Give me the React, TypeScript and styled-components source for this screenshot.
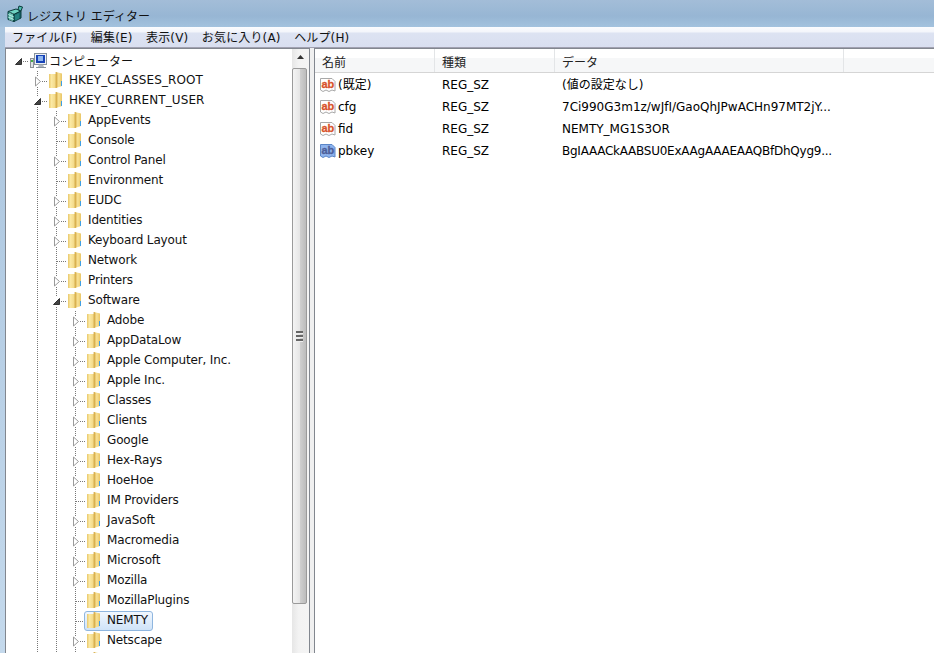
import { createGlobalStyle } from 'styled-components';
import styled from 'styled-components';

const GlobalStyle = createGlobalStyle`
  html, body {
    margin: 0;
    height: 100%;
    overflow: hidden;
  }
  body {
    font-family: "DejaVu Sans", "Noto Sans CJK JP", sans-serif;
    font-size: 12px;
    color: #000;
  }
`;

type TreeNode = {
  label: string;
  depth: number;
  state?: 'open' | 'closed';
  selected?: boolean;
};

const treeNodes: TreeNode[] = [
  { label: 'HKEY_CLASSES_ROOT', depth: 1, state: 'closed' },
  { label: 'HKEY_CURRENT_USER', depth: 1, state: 'open' },
  { label: 'AppEvents', depth: 2, state: 'closed' },
  { label: 'Console', depth: 2 },
  { label: 'Control Panel', depth: 2, state: 'closed' },
  { label: 'Environment', depth: 2 },
  { label: 'EUDC', depth: 2, state: 'closed' },
  { label: 'Identities', depth: 2, state: 'closed' },
  { label: 'Keyboard Layout', depth: 2, state: 'closed' },
  { label: 'Network', depth: 2 },
  { label: 'Printers', depth: 2, state: 'closed' },
  { label: 'Software', depth: 2, state: 'open' },
  { label: 'Adobe', depth: 3, state: 'closed' },
  { label: 'AppDataLow', depth: 3, state: 'closed' },
  { label: 'Apple Computer, Inc.', depth: 3, state: 'closed' },
  { label: 'Apple Inc.', depth: 3, state: 'closed' },
  { label: 'Classes', depth: 3, state: 'closed' },
  { label: 'Clients', depth: 3, state: 'closed' },
  { label: 'Google', depth: 3, state: 'closed' },
  { label: 'Hex-Rays', depth: 3, state: 'closed' },
  { label: 'HoeHoe', depth: 3, state: 'closed' },
  { label: 'IM Providers', depth: 3 },
  { label: 'JavaSoft', depth: 3, state: 'closed' },
  { label: 'Macromedia', depth: 3, state: 'closed' },
  { label: 'Microsoft', depth: 3, state: 'closed' },
  { label: 'Mozilla', depth: 3, state: 'closed' },
  { label: 'MozillaPlugins', depth: 3 },
  { label: 'NEMTY', depth: 3, selected: true },
  { label: 'Netscape', depth: 3, state: 'closed' },
  { label: '', depth: 3, state: 'closed' },
];

const values = [
  { name: '(既定)', type: 'REG_SZ', data: '(値の設定なし)', kind: 'red' },
  { name: 'cfg', type: 'REG_SZ', data: '7Ci990G3m1z/wJfI/GaoQhJPwACHn97MT2jY...', kind: 'red' },
  { name: 'fid', type: 'REG_SZ', data: 'NEMTY_MG1S3OR', kind: 'red' },
  { name: 'pbkey', type: 'REG_SZ', data: 'BgIAAACkAABSU0ExAAgAAAEAAQBfDhQyg9...', kind: 'blue', tight: true },
];

const Window = styled.div`
  width: 934px;
  height: 653px;
  display: flex;
  flex-direction: column;
  overflow: hidden;
  background: linear-gradient(#a9c4de, #c4d9ec);
`;

const TitleBar = styled.div`
  height: 27px;
  flex: none;
  display: flex;
  align-items: center;
  gap: 3px;
  padding-left: 7px;
  background: linear-gradient(#a3bdd8, #97b6d4 60%, #a3c2de);
`;

const Title = styled.span`
  font-size: 12px;
  padding-top: 3px;
  color: #111;
`;

const MenuBar = styled.div`
  height: 21px;
  flex: none;
  margin-left: 5px;
  display: flex;
  align-items: center;
  padding: 0 0 2px 7px;
  gap: 13.5px;
  background: linear-gradient(#fbfcfe 0, #f3f5fb 5px, #dde3f2 6px, #d9dff0);
  border-bottom: 1px solid #a0a0b0;
  box-sizing: border-box;
`;

const MenuItem = styled.span`
  font-size: 12px;
  letter-spacing: 0.15px;
  color: #111;
`;

const Body = styled.div`
  flex: 1;
  min-height: 0;
  margin-left: 5px;
  display: flex;
  background: #f0f0f0;
`;

const TreePane = styled.div`
  width: 305px;
  flex: none;
  display: flex;
  background: #fff;
  border: 1px solid #82878f;
  border-bottom: none;
  box-sizing: border-box;
`;

const TreeList = styled.div`
  flex: 1;
  min-width: 0;
  padding: 2px 0 0 3px;
  overflow: hidden;
`;

const Row = styled.div`
  height: 20px;
  display: flex;
  align-items: center;
`;

const GuideCell = styled.div<{ $line: boolean }>`
  width: 19px;
  height: 20px;
  flex: none;
  background: ${(p) =>
    p.$line ? 'repeating-linear-gradient(#777 0 1px, transparent 1px 2px) 9px 0 / 1px 100% no-repeat' : 'none'};
`;

const ExpanderCell = styled.div<{ $up: boolean }>`
  width: 19px;
  height: 20px;
  flex: none;
  display: flex;
  align-items: center;
  justify-content: center;
  background:
    repeating-linear-gradient(90deg, #777 0 1px, transparent 1px 2px) 10px 10px / 9px 1px no-repeat,
    ${(p) =>
      p.$up
        ? 'repeating-linear-gradient(#777 0 1px, transparent 1px 2px) 9px 0 / 1px 100% no-repeat'
        : 'none'};
`;

const ArrowBox = styled.svg`
  display: block;
  background: #fff;
`;

const FolderBox = styled.svg`
  flex: none;
  display: block;
  margin: -2px 4px 0 1px;
`;

const ComputerBox = styled.svg`
  flex: none;
  display: block;
  margin: 0 2px 0 1px;
`;

const NodeLabel = styled.span<{ $depth: number }>`
  height: 18px;
  line-height: 17px;
  padding: 0 3px 0 2px;
  margin-left: -1px;
  white-space: nowrap;
  color: #111;
  letter-spacing: ${(p) => (p.$depth === 1 ? '0.1px' : '-0.15px')};
`;

const RootLabel = styled.span`
  padding-bottom: 2px;
  white-space: nowrap;
  color: #111;
`;

const SelectedBox = styled.div`
  display: flex;
  align-items: center;
  height: 20px;
  margin-left: -1px;
  padding-right: 1px;
  box-sizing: border-box;
  border: 1px solid #8fb6df;
  border-radius: 3px;
  background: linear-gradient(#f1f7fe, #cfe3f8);
`;

const ScrollBar = styled.div`
  width: 17px;
  flex: none;
  display: flex;
  flex-direction: column;
  background: linear-gradient(90deg, #e6e6e6, #f3f3f3 40%, #f4f4f4);
`;

const ScrollButton = styled.div`
  height: 19px;
  width: 100%;
  flex: none;
  display: flex;
  align-items: center;
  justify-content: center;
  padding-bottom: 4px;
  box-sizing: border-box;
`;

const Thumb = styled.div`
  height: 536px;
  width: 15px;
  flex: none;
  display: flex;
  flex-direction: column;
  align-items: center;
  justify-content: center;
  gap: 1px;
  box-sizing: border-box;
  border: 1px solid #9a9a9a;
  border-radius: 2px;
  background: linear-gradient(90deg, #f4f4f4, #e6e6e6 50%, #cfcfcf 55%, #bcbcbc);
`;

const Grip = styled.div`
  width: 7px;
  height: 2px;
  background: #666;
  border-bottom: 1px solid #eee;
`;

const Splitter = styled.div`
  width: 4px;
  flex: none;
`;

const ListPane = styled.div`
  flex: 1;
  min-width: 0;
  background: #fff;
  border: 1px solid #82878f;
  border-bottom: none;
  border-right: none;
  box-sizing: border-box;
`;

const HeaderRow = styled.div`
  height: 24px;
  display: flex;
  box-sizing: border-box;
  border-bottom: 1px solid #d5d5d5;
  background: linear-gradient(#fff 0 9px, #f6f7f8 9px);
`;

const HeaderCell = styled.div<{ $width: number }>`
  width: ${(p) => p.$width}px;
  flex: none;
  box-sizing: border-box;
  padding: 4px 0 0 7px;
  border-right: 1px solid #e3e5e7;
  font-size: 12px;
  color: #222;
`;

const ValueList = styled.div`
  padding-top: 1px;
`;

const ValueRow = styled.div`
  height: 22px;
  display: flex;
  align-items: center;
  line-height: 15px;
`;

const NameCell = styled.div`
  width: 121px;
  flex: none;
  display: flex;
  align-items: center;
  gap: 2px;
  padding-left: 5px;
  box-sizing: border-box;
`;

const TextCell = styled.div<{ $width: number; $tight?: boolean }>`
  width: ${(p) => p.$width}px;
  flex: none;
  padding-left: 6px;
  box-sizing: border-box;
  white-space: nowrap;
  letter-spacing: ${(p) => (p.$tight ? '-0.25px' : '0')};
`;

const AppIcon = () => (
  <svg width="17" height="17" viewBox="0 0 17 17">
    <path d="M1 6.500l8-2.500 5 2-7 3.500z" fill="#6fd3c2" stroke="#0b3a3a" />
    <path d="M1 6.500v8l6 2v-7z" fill="#2fa596" stroke="#0b3a3a" />
    <path d="M7 9.500l7-3.500v7l-7 3.500z" fill="#17686c" stroke="#0b3a3a" />
    <path d="M1 9.500l6 2.500M1 12l6 2.500M3 7.500v8M5 8.500v7.500" stroke="#c9f4ea" strokeWidth="0.8" fill="none" />
    <path d="M9 9.500v6M11 8.500v6" stroke="#3aa89c" strokeWidth="0.8" fill="none" />
    <path d="M12 1l3.500 1-1.500 4-3-1.500z" fill="#4cbcae" stroke="#0b3a3a" />
  </svg>
);

const ComputerIcon = () => (
  <ComputerBox width="18" height="16" viewBox="0 0 18 16">
    <rect x="1.500" y="5.500" width="3" height="9" fill="#dfe3e6" stroke="#8b9197" />
    <rect x="2" y="7" width="2" height="2" fill="#45b045" />
    <rect x="5.500" y="0.500" width="12" height="11" fill="#eef1f4" stroke="#87929d" />
    <rect x="7" y="2" width="9" height="8" fill="#1844b8" />
    <path d="M9 3h5v5H9z" fill="#8fb6ee" />
    <path d="M10 11.500h4l1 2.500H9z" fill="#aeb6bd" />
    <rect x="7" y="14" width="10" height="1" fill="#87929d" />
  </ComputerBox>
);

const FolderIcon = () => (
  <FolderBox width="16" height="18" viewBox="0 0 16 18">
    <defs>
      <linearGradient id="foldLeft" x1="0" x2="1" y1="0" y2="0">
        <stop offset="0" stopColor="#e8c76a" />
        <stop offset="0.3" stopColor="#fbe9a4" />
        <stop offset="1" stopColor="#efd27c" />
      </linearGradient>
      <linearGradient id="foldRight" x1="0" x2="1" y1="0" y2="0">
        <stop offset="0" stopColor="#d9ad4a" />
        <stop offset="0.45" stopColor="#f8e296" />
        <stop offset="1" stopColor="#e9c565" />
      </linearGradient>
    </defs>
    <path d="M1 3h8v14H1z" fill="url(#foldLeft)" />
    <path d="M8 1l6 1.500V15l-6 2z" fill="url(#foldRight)" />
    <path d="M8 1v16" stroke="#d0a848" strokeWidth="0.8" />
    <rect x="13" y="10" width="1" height="5" fill="#3f9fe4" />
  </FolderBox>
);

const OpenArrow = () => (
  <ArrowBox width="9" height="9" viewBox="0 0 9 9">
    <path d="M7.500 1.500v6h-6z" fill="#444" stroke="#333" strokeWidth="1" />
  </ArrowBox>
);

const ClosedArrow = () => (
  <ArrowBox width="8" height="11" viewBox="0 0 8 11">
    <path d="M1.500 1v9l5-4.500z" fill="#fff" stroke="#9a9a9a" strokeWidth="1" />
  </ArrowBox>
);

const ValueIcon = ({ kind }: { kind: string }) => {
  const back = kind === 'blue' ? '#8fb4ee' : '#fff';
  const edge = kind === 'blue' ? '#5a86c8' : '#a8a8a8';
  const ink = kind === 'blue' ? '#4d5f9a' : '#d8532c';
  return (
    <svg width="16" height="16" viewBox="0 0 16 16">
      <path d="M0.500 1.500h11.500l3 3v9.500l-3-1-3 1.500-3-1.500-3 1.500-2.500-1.500z" fill={back} stroke={edge} />
      <text
        x="1.500"
        y="11"
        fontFamily="Liberation Sans"
        fontWeight="700"
        fontSize="11"
        fill={ink}
        stroke={ink}
        strokeWidth="0.3"
      >
        ab
      </text>
    </svg>
  );
};

const UpTriangle = () => (
  <svg width="7" height="4" viewBox="0 0 7 4">
    <path d="M3.500 0L7 4H0z" fill="#333" />
  </svg>
);

const TreeRow = ({ node }: { node: TreeNode }) => {
  const guides = [];
  for (let i = 1; i < node.depth; i++) {
    guides.push(<GuideCell key={i} $line />);
  }
  return (
    <Row>
      <GuideCell $line={false} />
      {guides}
      <ExpanderCell $up>
        {node.state === 'open' && <OpenArrow />}
        {node.state === 'closed' && <ClosedArrow />}
      </ExpanderCell>
      {node.selected ? (
        <SelectedBox>
          <FolderIcon />
          <NodeLabel $depth={node.depth}>{node.label}</NodeLabel>
        </SelectedBox>
      ) : (
        <>
          <FolderIcon />
          <NodeLabel $depth={node.depth}>{node.label}</NodeLabel>
        </>
      )}
    </Row>
  );
};

export default function App() {
  return (
    <Window>
      <GlobalStyle />
      <TitleBar>
        <AppIcon />
        <Title>レジストリ エディター</Title>
      </TitleBar>
      <MenuBar>
        <MenuItem>ファイル(F)</MenuItem>
        <MenuItem>編集(E)</MenuItem>
        <MenuItem>表示(V)</MenuItem>
        <MenuItem>お気に入り(A)</MenuItem>
        <MenuItem>ヘルプ(H)</MenuItem>
      </MenuBar>
      <Body>
        <TreePane>
          <TreeList>
            <Row>
              <ExpanderCell $up={false}>
                <OpenArrow />
              </ExpanderCell>
              <ComputerIcon />
              <RootLabel>コンピューター</RootLabel>
            </Row>
            {treeNodes.map((node, i) => (
              <TreeRow key={i} node={node} />
            ))}
          </TreeList>
          <ScrollBar>
            <ScrollButton>
              <UpTriangle />
            </ScrollButton>
            <Thumb>
              <Grip />
              <Grip />
              <Grip />
            </Thumb>
          </ScrollBar>
        </TreePane>
        <Splitter />
        <ListPane>
          <HeaderRow>
            <HeaderCell $width={120}>名前</HeaderCell>
            <HeaderCell $width={120}>種類</HeaderCell>
            <HeaderCell $width={289}>データ</HeaderCell>
          </HeaderRow>
          <ValueList>
            {values.map((v) => (
              <ValueRow key={v.name}>
                <NameCell>
                  <ValueIcon kind={v.kind} />
                  {v.name}
                </NameCell>
                <TextCell $width={120}>{v.type}</TextCell>
                <TextCell $width={288} $tight={v.tight}>
                  {v.data}
                </TextCell>
              </ValueRow>
            ))}
          </ValueList>
        </ListPane>
      </Body>
    </Window>
  );
}
